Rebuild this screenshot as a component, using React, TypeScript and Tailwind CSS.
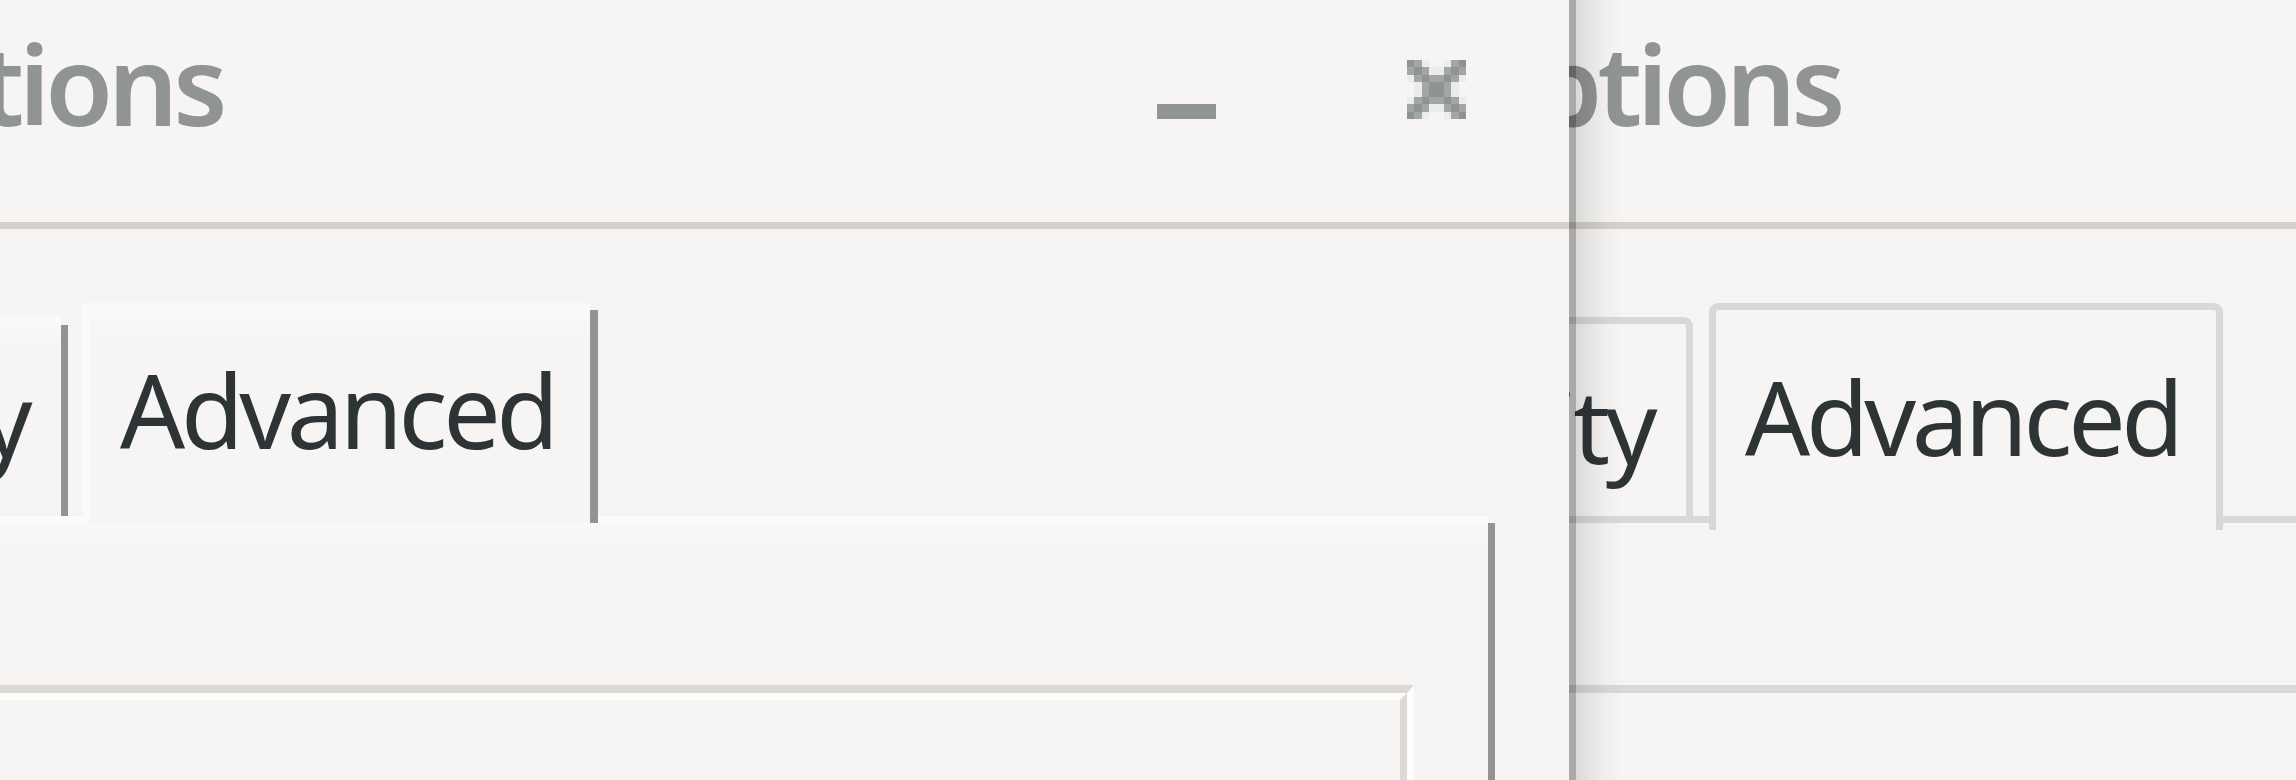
import React from "react";

const X_GRID = [
  "DML..LMD",
  "MDMLLMDM",
  "LMDMMDML",
  ".LMDDML.",
  ".LMDDML.",
  "LMDMMDML",
  "MDMLLMDM",
  "DML..LMD",
];
const X_COL: Record<string, string> = { D: "#8f9393", M: "#a3a6a6", L: "#ececeb" };

function CloseIcon() {
  return (
    <svg width="59" height="59" viewBox="0 0 8 8" shapeRendering="crispEdges" className="block">
      {X_GRID.flatMap((row, y) =>
        row.split("").map((c, x) =>
          c === "." ? null : <rect key={`${x}-${y}`} x={x} y={y} width="1.05" height="1.05" fill={X_COL[c]} />
        )
      )}
    </svg>
  );
}

function LeftWindow() {
  return (
    <div className="w-[1569px] shrink-0 h-[780px] flex flex-col overflow-hidden">
      {/* header bar */}
      <div className="h-[229px] shrink-0 border-b-[7px] border-[#d5d0cc] flex items-start">
        <div className="shrink-0 ml-[-166px] mt-[28px] text-[110px] leading-none font-semibold tracking-[-5px] text-[#919494] whitespace-nowrap">
          Options
        </div>
        <div className="ml-auto mt-[104px] w-[59px] h-[15px] bg-[#909494] shrink-0" />
        <div className="ml-[191px] mt-[60px] mr-[103px] shrink-0">
          <CloseIcon />
        </div>
      </div>
      {/* tabs */}
      <div className="h-[287px] shrink-0 flex items-end">
        <div className="w-[68px] shrink-0 flex justify-end">
          <div className="shrink-0 h-[199px] flex">
            <div className="border-t-[8px] border-t-[#fafaf9] bg-[linear-gradient(to_bottom,#f9f9f8,#f6f5f4_24px)] pl-[30px] pr-[33px] pt-[42px] text-[102px] leading-none tracking-[-4.5px] text-[#2e3436] whitespace-nowrap">
              Security
            </div>
            <div className="w-[7px] mt-[8px] bg-[#939393]" />
          </div>
        </div>
        <div className="relative z-10 ml-[15px] h-[220px] mb-[-7px] shrink-0 flex">
          <div className="w-[507px] border-l-[7px] border-l-[#fafaf9] border-t-[7px] border-t-[#fafaf9] bg-[linear-gradient(to_bottom,#f9f9f8,#f6f5f4_30px)] pl-[30px] pt-[49px] text-[102px] leading-none tracking-[-4.3px] text-[#2e3436] whitespace-nowrap">
            Advanced
          </div>
          <div className="w-[8px] mt-[7px] bg-[#939393]" />
        </div>
      </div>
      {/* panel */}
      <div className="flex-1 ml-[-40px] mr-[74px] flex">
        <div className="flex-1 border-t-[7px] border-t-[#fbfbfa] bg-[linear-gradient(to_bottom,#f9f9f8,#f6f5f4_26px)] pt-[162px] pr-[74px] flex flex-col">
          <div className="flex-1 border-t-[8px] border-t-[#dcd9d5] border-r-[7px] border-r-[#fdfdfc] flex flex-col">
            <div className="flex-1 border-t-[7px] border-t-[#fdfdfc] border-r-[7px] border-r-[#dcd9d5]" />
          </div>
        </div>
        <div className="w-[7px] mt-[7px] bg-[#939393]" />
      </div>
    </div>
  );
}

function RightWindow() {
  return (
    <div className="relative flex-1 h-[780px] overflow-hidden flex flex-col">
      <div className="h-[229px] shrink-0 border-b-[7px] border-[#d5d0cc] flex items-start">
        <div className="shrink-0 ml-[-117px] mt-[28px] text-[110px] leading-none font-semibold tracking-[-5px] text-[#919494] whitespace-nowrap">
          Options
        </div>
      </div>
      <div className="h-[287px] shrink-0 flex items-end">
        <div className="w-[124px] shrink-0 flex justify-end">
          <div className="shrink-0 h-[199px] border-t-[7px] border-r-[7px] border-[#d8d8d8] rounded-tr-[9px] pl-[30px] pr-[33px] pt-[50px] text-[102px] leading-none tracking-[-4.5px] text-[#2e3436] whitespace-nowrap">
            Security
          </div>
        </div>
        <div className="relative z-10 ml-[16px] w-[514px] h-[227px] mb-[-14px] shrink-0 border-l-[7px] border-t-[7px] border-r-[7px] border-[#d8d8d8] rounded-t-[9px] bg-[#f6f5f4] pl-[29px] pt-[56px] text-[102px] leading-none tracking-[-4.3px] text-[#2e3436] whitespace-nowrap">
          Advanced
        </div>
      </div>
      <div className="flex-1 border-t-[7px] border-[#d8d8d8] pt-[162px] flex flex-col">
        <div className="flex-1 border-t-[8px] border-[#d8d8d8]" />
      </div>
      {/* edge and shadow of the window in front */}
      <div className="pointer-events-none absolute left-0 top-0 bottom-0 w-[7px] bg-black/[0.31]" />
      <div className="pointer-events-none absolute left-[7px] top-0 bottom-0 w-[50px] bg-[linear-gradient(to_right,rgba(0,0,0,0.115),rgba(0,0,0,0.065)_14px,rgba(0,0,0,0.025)_30px,transparent_48px)]" />
    </div>
  );
}

export default function App() {
  return (
    <div className="w-[2296px] h-[780px] overflow-hidden bg-[#f6f5f4] flex font-['Noto_Sans',sans-serif]">
      <LeftWindow />
      <RightWindow />
    </div>
  );
}
